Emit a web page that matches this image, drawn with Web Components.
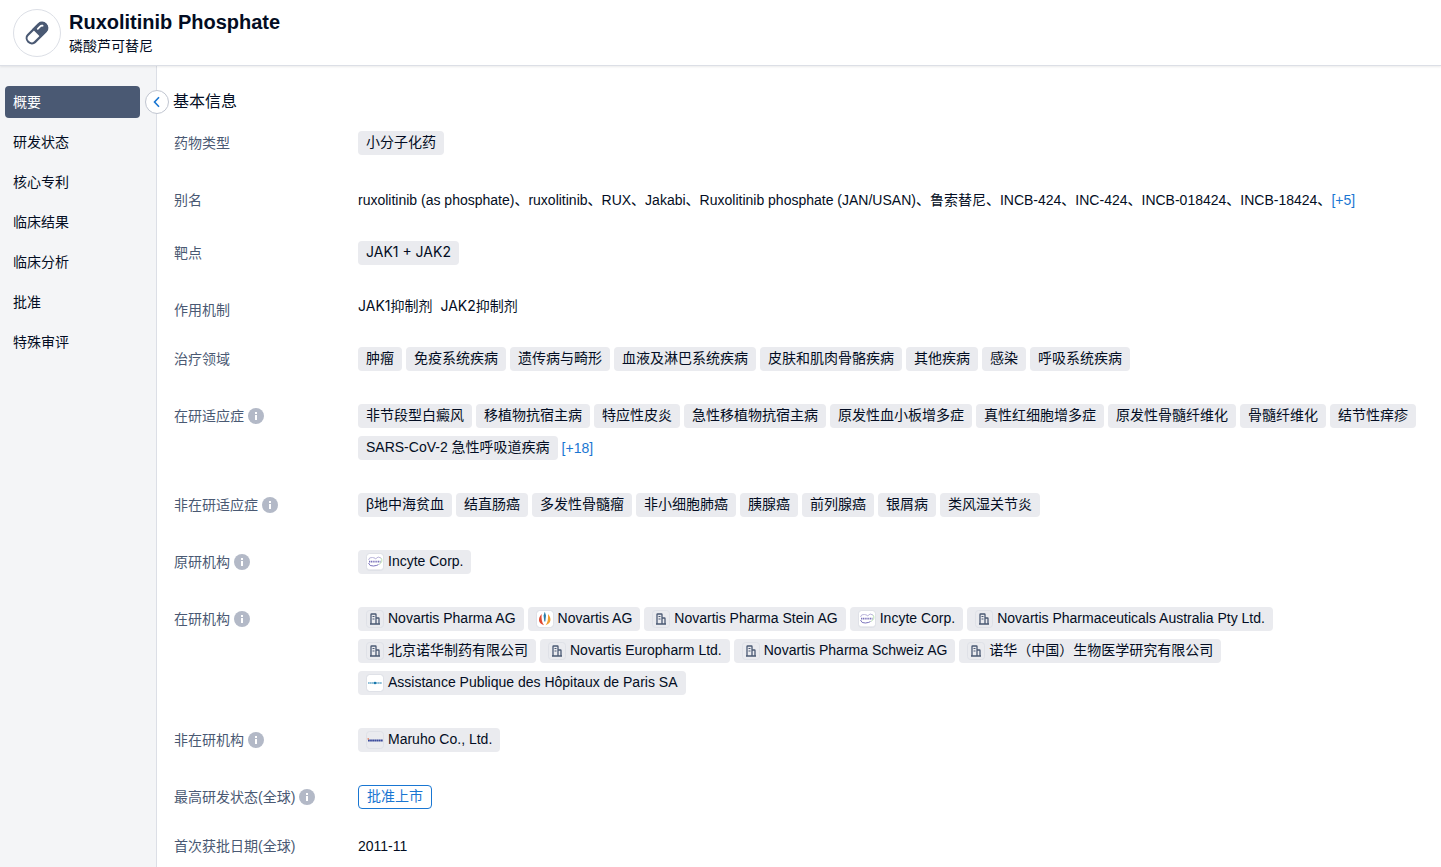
<!DOCTYPE html>
<html lang="zh-CN">
<head>
<meta charset="utf-8">
<meta name="viewport" content="width=device-width, initial-scale=1">
<title>Ruxolitinib Phosphate</title>
<style>
  body {
    margin: 0;
    font: 14px/24px "Liberation Sans", "Noto Sans CJK SC", sans-serif;
    color: #030d23;
    background: #fff;
    --slate: #4a5973;
    --line: #dcdfe6;
    --link: #1976d2;
    --chip: #eaebef;
  }
</style>
</head>
<body>
<drug-page>
  <drug-header slot="header">
    Ruxolitinib Phosphate
    <span slot="subtitle">磷酸芦可替尼</span>
  </drug-header>

  <side-nav slot="nav">
    <nav-item href="#overview" active>概要</nav-item>
    <nav-item href="#status">研发状态</nav-item>
    <nav-item href="#patents">核心专利</nav-item>
    <nav-item href="#results">临床结果</nav-item>
    <nav-item href="#analysis">临床分析</nav-item>
    <nav-item href="#approval">批准</nav-item>
    <nav-item href="#review">特殊审评</nav-item>
  </side-nav>

  <info-section>
    <span slot="heading">基本信息</span>

    <info-row label="药物类型">
      <tag-list><info-tag>小分子化药</info-tag></tag-list>
    </info-row>

    <info-row label="别名">
      <alias-list>ruxolitinib (as phosphate)、ruxolitinib、RUX、Jakabi、Ruxolitinib phosphate (JAN/USAN)、鲁索替尼、INCB-424、INC-424、INCB-018424、INCB-18424、<more-button>[+5]</more-button></alias-list>
    </info-row>

    <info-row label="靶点">
      <tag-list><info-tag target>JAK1 + JAK2</info-tag></tag-list>
    </info-row>

    <info-row label="作用机制">
      <mechanism-list><span>JAK1抑制剂</span><span>JAK2抑制剂</span></mechanism-list>
    </info-row>

    <info-row label="治疗领域">
      <tag-list>
        <info-tag>肿瘤</info-tag>
        <info-tag>免疫系统疾病</info-tag>
        <info-tag>遗传病与畸形</info-tag>
        <info-tag>血液及淋巴系统疾病</info-tag>
        <info-tag>皮肤和肌肉骨骼疾病</info-tag>
        <info-tag>其他疾病</info-tag>
        <info-tag>感染</info-tag>
        <info-tag>呼吸系统疾病</info-tag>
      </tag-list>
    </info-row>

    <info-row label="在研适应症" hint>
      <tag-list>
        <info-tag>非节段型白癜风</info-tag>
        <info-tag>移植物抗宿主病</info-tag>
        <info-tag>特应性皮炎</info-tag>
        <info-tag>急性移植物抗宿主病</info-tag>
        <info-tag>原发性血小板增多症</info-tag>
        <info-tag>真性红细胞增多症</info-tag>
        <info-tag>原发性骨髓纤维化</info-tag>
        <info-tag>骨髓纤维化</info-tag>
        <info-tag>结节性痒疹</info-tag>
        <info-tag>SARS-CoV-2 急性呼吸道疾病</info-tag>
        <more-button>[+18]</more-button>
      </tag-list>
    </info-row>

    <info-row label="非在研适应症" hint>
      <tag-list>
        <info-tag>β地中海贫血</info-tag>
        <info-tag>结直肠癌</info-tag>
        <info-tag>多发性骨髓瘤</info-tag>
        <info-tag>非小细胞肺癌</info-tag>
        <info-tag>胰腺癌</info-tag>
        <info-tag>前列腺癌</info-tag>
        <info-tag>银屑病</info-tag>
        <info-tag>类风湿关节炎</info-tag>
      </tag-list>
    </info-row>

    <info-row label="原研机构" hint>
      <tag-list><org-tag logo="incyte">Incyte Corp.</org-tag></tag-list>
    </info-row>

    <info-row label="在研机构" hint>
      <tag-list>
        <org-tag>Novartis Pharma AG</org-tag>
        <org-tag logo="novartis">Novartis AG</org-tag>
        <org-tag>Novartis Pharma Stein AG</org-tag>
        <org-tag logo="incyte">Incyte Corp.</org-tag>
        <org-tag>Novartis Pharmaceuticals Australia Pty Ltd.</org-tag>
        <org-tag>北京诺华制药有限公司</org-tag>
        <org-tag>Novartis Europharm Ltd.</org-tag>
        <org-tag>Novartis Pharma Schweiz AG</org-tag>
        <org-tag>诺华（中国）生物医学研究有限公司</org-tag>
        <org-tag logo="aphp">Assistance Publique des Hôpitaux de Paris SA</org-tag>
      </tag-list>
    </info-row>

    <info-row label="非在研机构" hint>
      <tag-list><org-tag logo="maruho">Maruho Co., Ltd.</org-tag></tag-list>
    </info-row>

    <info-row label="最高研发状态(全球)" hint>
      <status-tag>批准上市</status-tag>
    </info-row>

    <info-row label="首次获批日期(全球)">2011-11</info-row>
  </info-section>
</drug-page>

<script>
function define(name, html, setup) {
  customElements.define(name, class extends HTMLElement {
    constructor() {
      super();
      this.attachShadow({ mode: "open" });
      this.shadowRoot.innerHTML = html;
    }
    connectedCallback() {
      if (setup) setup(this, this.shadowRoot);
    }
  });
}

define("drug-page", /*html*/ `
  <style>
    :host { display: flex; flex-direction: column; min-height: 100vh; }
    .body { display: flex; flex: 1; }
    main { flex: 1; min-width: 0; }
  </style>
  <slot name="header"></slot>
  <div class="body">
    <slot name="nav"></slot>
    <main><slot></slot></main>
  </div>
`);

define("drug-header", /*html*/ `
  <style>
    :host { display: block; position: relative; z-index: 1; }
    header {
      display: flex;
      align-items: center;
      gap: 8px;
      padding: 9px 13px 8px;
      background: #fff;
      border-bottom: 1px solid var(--line);
      box-shadow: 0 1px 2px rgba(0, 0, 0, .08);
    }
    .badge {
      display: flex;
      align-items: center;
      justify-content: center;
      box-sizing: border-box;
      width: 48px;
      height: 48px;
      border: 1px solid var(--line);
      border-radius: 50%;
    }
    h1 { margin: 0; font-size: 20px; line-height: 24px; font-weight: 700; }
    p { margin: 0; line-height: 24px; }
    .name { padding-top: 1px; margin-bottom: -1px; }
  </style>
  <header>
    <div class="badge">
      <svg width="26" height="26" viewBox="0 0 26 26" aria-hidden="true">
        <g transform="rotate(45 13 13)">
          <rect x="8" y="-.8" width="10" height="27.600" rx="5" fill="#fff" stroke="#4a5973" stroke-width="2.200" transform="translate(0 1.300) scale(1 .9)"/>
          <path d="M7 13.500V6a6 6 0 0 1 12 0v7.500z" fill="#4a5973"/>
          <path d="M10.600 9.500V6a2.400 2.400 0 0 1 1.200-2.100" fill="none" stroke="#fff" stroke-width="1.800" stroke-linecap="round"/>
        </g>
      </svg>
    </div>
    <div class="name">
      <h1><slot></slot></h1>
      <p><slot name="subtitle"></slot></p>
    </div>
  </header>
`);

define("side-nav", /*html*/ `
  <style>
    :host {
      display: block;
      position: relative;
      box-sizing: border-box;
      flex: 0 0 157px;
      padding: 20px 16px 0 5px;
      background: #f4f5f7;
      border-right: 1px solid var(--line);
    }
    nav { display: flex; flex-direction: column; gap: 8px; }
    button {
      position: absolute;
      top: 24px;
      right: -13px;
      display: flex;
      align-items: center;
      justify-content: center;
      width: 24px;
      height: 24px;
      padding: 0;
      background: #fff;
      border: 1px solid #c0c5d0;
      border-radius: 50%;
      cursor: pointer;
    }
  </style>
  <nav><slot></slot></nav>
  <button type="button" aria-label="收起">
    <svg width="12" height="12" viewBox="0 0 12 12" aria-hidden="true">
      <path d="M8 1.200 3.500 6 8 10.800" fill="none" stroke="#1976d2" stroke-width="1.600"/>
    </svg>
  </button>
`);

define("nav-item", /*html*/ `
  <style>
    :host { display: block; }
    a {
      display: block;
      padding: 0 8px;
      line-height: 32px;
      border-radius: 4px;
      color: inherit;
      text-decoration: none;
    }
    :host([active]) a { background: var(--slate); color: #fff; }
  </style>
  <a><slot></slot></a>
`, (el, root) => {
  root.querySelector("a").href = el.getAttribute("href");
});

define("info-section", /*html*/ `
  <style>
    :host { display: block; padding: 24px 16px 0; }
    h2 { margin: 0 0 17px; font-size: 16px; line-height: 24px; font-weight: 400; }
    .rows { display: flex; flex-direction: column; gap: 25px; padding-left: 1px; }
  </style>
  <h2><slot name="heading"></slot></h2>
  <div class="rows"><slot></slot></div>
`);

define("info-row", /*html*/ `
  <style>
    :host { display: flex; }
    .label {
      display: flex;
      align-items: center;
      gap: 4px;
      flex: 0 0 184px;
      height: 24px;
      color: var(--slate);
    }
    .value { flex: 1; min-width: 0; }
    svg { display: none; }
    :host([hint]) svg { display: block; }
  </style>
  <div class="label">
    <span></span>
    <svg width="16" height="16" viewBox="0 0 16 16" aria-hidden="true">
      <circle cx="8" cy="8" r="8" fill="#b3b9c7"/>
      <path d="M7 4h2v2H7zM7 7h2v5H7z" fill="#fff"/>
    </svg>
  </div>
  <div class="value"><slot></slot></div>
`, (el, root) => {
  root.querySelector("span").textContent = el.getAttribute("label");
});

define("tag-list", /*html*/ `
  <style>
    :host { display: flex; flex-wrap: wrap; gap: 8px 4px; padding-bottom: 8px; }
  </style>
  <slot></slot>
`);

define("alias-list", /*html*/ `
  <style>
    :host { display: block; padding-bottom: 4px; }
  </style>
  <slot></slot>
`);

define("mechanism-list", /*html*/ `
  <style>
    :host { display: flex; gap: 8px; line-height: 16px; font-family: Inter, "Noto Sans CJK SC", sans-serif; }
  </style>
  <slot></slot>
`);

define("info-tag", /*html*/ `
  <style>
    :host {
      display: block;
      box-sizing: border-box;
      height: 24px;
      padding: 0 8px;
      line-height: 22px;
      background: var(--chip);
      border-radius: 4px;
    }
    :host([target]) { font-family: Inter, sans-serif; }
  </style>
  <slot></slot>
`);

const logos = {
  building: `
    <path d="M5 14V4.500Q5 4 5.500 4H9.500Q10 4 10 4.500V14M10 8H12.500Q13 8 13 8.500V14M4 14H14" fill="none" stroke="#4a5973" stroke-width="1.300"/>
    <path d="M6.500 6.500H8.500M6.500 9H8.500" stroke="#4a5973" stroke-width="1.200"/>`,
  incyte: `
    <rect x="1" y="1" width="16" height="15" rx="2" fill="#fff"/>
    <path d="M2.500 7Q3 4 6.500 4.500T9.500 6Q12 2.500 15 5" fill="none" stroke="#a8a2d0" stroke-width=".8"/>
    <path d="M2.500 10Q3.500 13.500 7.500 13T12.500 11.500" fill="none" stroke="#6d64b4" stroke-width=".9"/>
    <path d="M15 5Q17.500 8.500 13 11.500" fill="none" stroke="#a8d8a0" stroke-width=".8"/>
    <path d="M3 8.600H14.500" stroke="#7a72ba" stroke-width="1.600" stroke-dasharray="1.200 .6"/>`,
  novartis: `
    <rect x="1" y="1" width="16" height="16" rx="3" fill="#fff"/>
    <path d="M5.600 4C1.800 8.500 1.800 13 8 15.200C5.800 12.500 5.300 9 5.600 4z" fill="#e0492f"/>
    <path d="M12 4C15.800 8.500 15.500 13 9.600 15.200C11.800 12.500 12.300 9 12 4z" fill="#f0a030"/>
    <path d="M8.800 1.800 7.600 5.500 8.300 11.500H9.300L10 5.500z" fill="#2a7ea8"/>`,
  aphp: `
    <rect x="1" y="1" width="16" height="16" rx="3" fill="#fff"/>
    <path d="M2 9H16" stroke="#6aaacb" stroke-width="1.400" stroke-dasharray="1.600 .3"/>
    <circle cx="9" cy="9" r="1.300" fill="#1878ad"/>`,
  maruho: `
    <path d="M2 9.500H17" stroke="#3a4a9c" stroke-width="1.800" stroke-dasharray="1.800 .3"/>
    <path d="M1.500 7.800H3" stroke="#e87850" stroke-width="1.200"/>`
};

define("org-tag", /*html*/ `
  <style>
    :host { display: block; }
    a {
      display: flex;
      gap: 4px;
      box-sizing: border-box;
      height: 24px;
      padding: 0 8px;
      line-height: 22px;
      background: var(--chip);
      border-radius: 4px;
      color: inherit;
      text-decoration: none;
    }
    svg { margin-top: 3px; }
  </style>
  <a href="#org">
    <svg width="18" height="18" viewBox="0 0 18 18" aria-hidden="true">
      <g></g>
      <rect x=".5" y=".5" width="17" height="17" rx="3" fill="none" stroke="#dfe1e7"/>
    </svg>
    <span><slot></slot></span>
  </a>
`, (el, root) => {
  root.querySelector("g").innerHTML = logos[el.getAttribute("logo") || "building"];
});

define("more-button", /*html*/ `
  <style>
    :host { display: inline-block; }
    button {
      padding: 0;
      border: 0;
      background: none;
      color: var(--link);
      font: inherit;
      line-height: 24px;
      cursor: pointer;
    }
  </style>
  <button type="button"><slot></slot></button>
`);

define("status-tag", /*html*/ `
  <style>
    :host {
      display: block;
      box-sizing: border-box;
      width: max-content;
      height: 24px;
      padding: 0 8px;
      line-height: 20px;
      border: 1px solid var(--link);
      border-radius: 4px;
      color: var(--link);
    }
  </style>
  <slot></slot>
`);
</script>
</body>
</html>
